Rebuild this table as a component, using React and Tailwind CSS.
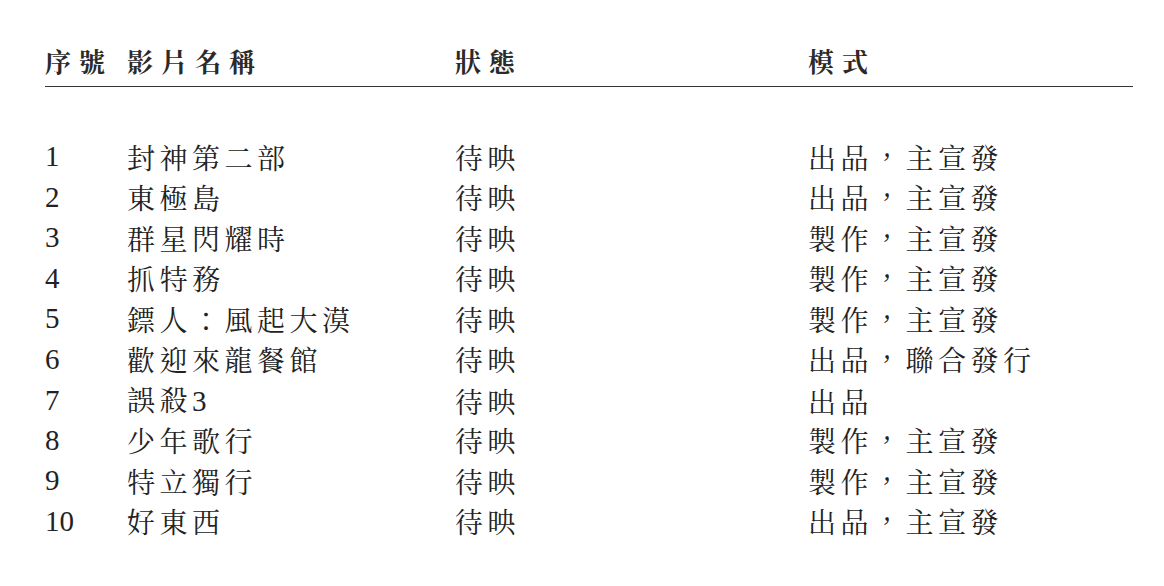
import React from 'react'

const films = [
    { no: 1, name: '封神第二部', status: '待映', mode: '出品，主宣發' },
    { no: 2, name: '東極島', status: '待映', mode: '出品，主宣發' },
    { no: 3, name: '群星閃耀時', status: '待映', mode: '製作，主宣發' },
    { no: 4, name: '抓特務', status: '待映', mode: '製作，主宣發' },
    { no: 5, name: '鏢人：風起大漠', status: '待映', mode: '製作，主宣發' },
    { no: 6, name: '歡迎來龍餐館', status: '待映', mode: '出品，聯合發行' },
    { no: 7, name: '誤殺', suffix: '3', status: '待映', mode: '出品' },
    { no: 8, name: '少年歌行', status: '待映', mode: '製作，主宣發' },
    { no: 9, name: '特立獨行', status: '待映', mode: '製作，主宣發' },
    { no: 10, name: '好東西', status: '待映', mode: '出品，主宣發' },
]

const cjk = "font-['Noto_Serif_CJK_TC','Noto_Sans_CJK_TC',serif]"
const digits = "font-['Liberation_Serif',serif] text-[29px] tracking-normal"
const cols = 'grid grid-cols-[82px_328px_353px_1fr]'

const App = () => {
    return (
        <div className={`w-[1164px] h-[586px] bg-white text-[#222] pl-[45px] pr-[31px] pt-[44px] ${cjk}`}>
            {/* header */}
            <div className={`${cols} border-b-[1.5px] border-[#333] pb-[8px] text-[26px] leading-[34px] font-bold tracking-[8px] text-[#2a2a2a]`}>
                <div>序號</div>
                <div>影片名稱</div>
                <div>狀態</div>
                <div>模式</div>
            </div>

            <div className="mt-[48px]">
                {films.map((f) => (
                    <div key={f.no} className={`${cols} h-[40.5px] items-center text-[28px] tracking-[4.5px]`}>
                        <div className={digits}>{f.no}</div>
                        <div className="whitespace-nowrap">
                            {f.name}
                            {f.suffix && <span className={digits}>{f.suffix}</span>}
                        </div>
                        <div>{f.status}</div>
                        <div className="whitespace-nowrap">{f.mode}</div>
                    </div>
                ))}
            </div>
        </div>
    )
}

export default App
